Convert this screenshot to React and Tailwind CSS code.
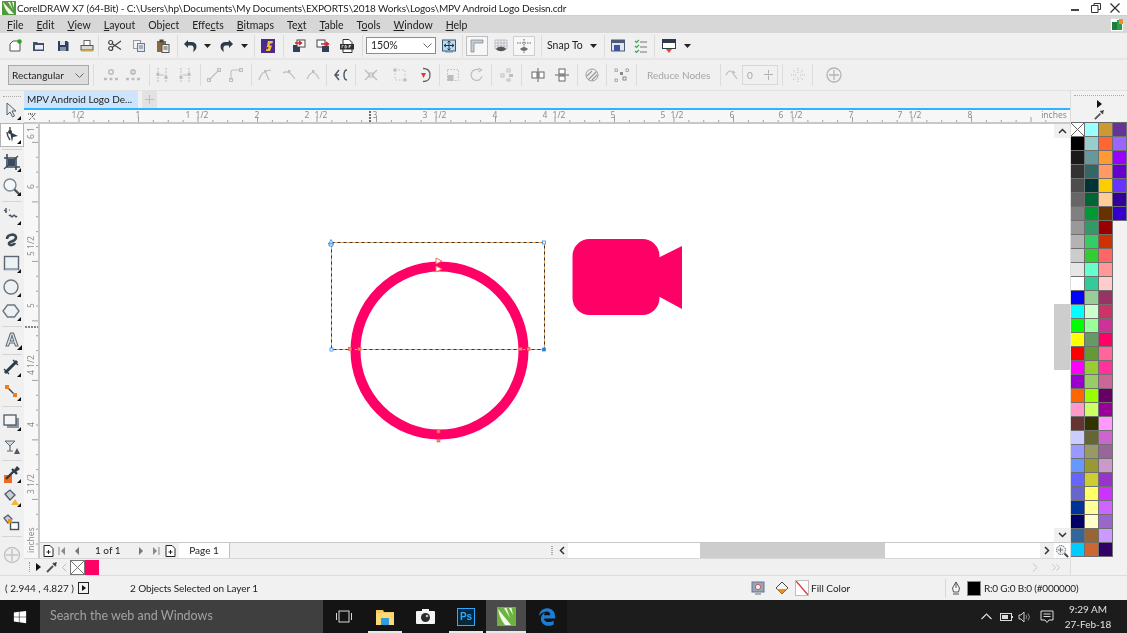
import React from "react";
import { FaWindows } from "react-icons/fa";
import { FaEdgeLegacy } from "react-icons/fa6";

const menu = [
  ["", "F", "ile"], ["", "E", "dit"], ["", "V", "iew"], ["", "L", "ayout"], ["Object", "", ""],
  ["Effe", "c", "ts"], ["", "B", "itmaps"], ["Te", "x", "t"], ["", "T", "able"], ["T", "o", "ols"],
  ["", "W", "indow"], ["", "H", "elp"],
];

const palette = [
  ["#ffffff", "#000000", "#1a1a1a", "#333333", "#4d4d4d", "#666666", "#808080", "#999999", "#b3b3b3", "#cccccc", "#e6e6e6", "#ffffff", "#0000ff", "#00ffff", "#00ff00", "#ffff00", "#ff0000", "#ff00ff", "#9900cc", "#ff6600", "#ff99cc", "#663333", "#ccccff", "#9999ff", "#6699ff", "#6666ff", "#6666cc", "#003399", "#000066", "#336699", "#00ccff"],
  ["#99ffff", "#99cccc", "#669999", "#336666", "#003333", "#006633", "#009933", "#339966", "#33cc66", "#33cc33", "#66ffcc", "#33cc99", "#99cc99", "#ccffcc", "#99ff99", "#669966", "#669933", "#99cc33", "#99cc66", "#99ff00", "#ccff66", "#333300", "#666633", "#999966", "#999933", "#cccc33", "#ffff66", "#ffff99", "#ffffcc", "#996633", "#cc6633"],
  ["#cc9933", "#ff6633", "#ff9933", "#ff9966", "#ffcc00", "#ffcc99", "#663300", "#990000", "#cc3300", "#ff6666", "#ff9999", "#ffcccc", "#993366", "#cc3366", "#cc3399", "#ff0066", "#ff6699", "#ff3399", "#cc6699", "#660066", "#990099", "#ff99ff", "#cc66cc", "#996699", "#cc99cc", "#9933cc", "#cc33ff", "#cc66ff", "#9966cc", "#cc99ff", "#330066"],
  ["#663399", "#9966ff", "#9900ff", "#6600cc", "#6633ff", "#330099", "#3300cc"],
];

// small wrapper so every toolbar glyph shares one viewBox
function G({ children, s = 16, className = "" }) {
  return (
    <svg width={s} height={s} viewBox="0 0 16 16" fill="none" className={"shrink-0 " + className}>
      {children}
    </svg>
  );
}

function Sep({ className = "" }) {
  return <div className={"w-px h-[22px] shrink-0 bg-[#dcdcdc] " + className} />;
}

function Cell({ children, className = "w-6" }) {
  return <div className={"flex items-center justify-center shrink-0 " + className}>{children}</div>;
}

function Caret() {
  return (
    <svg width="7" height="4" viewBox="0 0 7 4"><path d="M0 0h7L3.5 4z" fill="#222" /></svg>
  );
}

const dis = "#bdbdbd";

// disabled node-edit glyph, two nodes and a link
function NodeGlyph({ d = "M3 13 13 3" }) {
  return (
    <G>
      <path d={d} stroke={dis} strokeWidth="1.1" />
      <rect x="1.5" y="11.5" width="3" height="3" stroke={dis} />
      <rect x="11.5" y="1.5" width="3" height="3" stroke={dis} />
    </G>
  );
}

function AddNodes({ minus }) {
  return (
    <G>
      <circle cx="8" cy="5" r="3" fill={dis} />
      <path d={minus ? "M6.5 5h3" : "M6.5 5h3M8 3.5v3"} stroke="#fff" />
      <path d="M1 12h3M6.5 12h3M12 12h3" stroke={dis} strokeWidth="2.4" />
    </G>
  );
}

function SplitNodes({ flip }) {
  return (
    <G>
      <path d="M4 1v14M12 1v14" stroke={dis} strokeDasharray="2 1" />
      <rect x="2.5" y={flip ? 9 : 6} width="3" height="3" fill={dis} />
      <rect x="10.5" y={flip ? 6 : 9} width="3" height="3" fill={dis} />
      <path d="M6 8h4" stroke={dis} />
    </G>
  );
}

function Curve({ d }) {
  return (
    <G>
      <path d={d} stroke={dis} strokeWidth="1.2" />
      <rect x="7" y="3" width="2.4" height="2.4" fill={dis} />
    </G>
  );
}

function TitleBar() {
  return (
    <div className="h-4 bg-white flex items-center shrink-0 text-[#222] border-b border-[#d0d0d0]">
      <svg width="14" height="14" viewBox="0 0 14 14" className="ml-[2px] mt-px">
        <rect width="14" height="14" fill="#4f9a3d" />
        <path d="M1 1 12 13H7C4 10 2 6 1 1zM6 1h2l3 8zM10 1h2v6z" fill="#eef6e6" />
      </svg>
      <span className="ml-[1px] text-[10px] tracking-[-0.13px] leading-4 whitespace-nowrap">
        CorelDRAW X7 (64-Bit) - C:\Users\hp\Documents\My Documents\EXPORTS\2018 Works\Logos\MPV Android Logo Desisn.cdr
      </span>
      <div className="ml-auto flex items-center">
        <svg width="8" height="3" viewBox="0 0 8 3" className="mt-[5px] mr-3"><rect width="8" height="2" fill="#444" /></svg>
        <svg width="10" height="10" viewBox="0 0 10 10" className="mr-[9px]"><path d="M3 2.5V.5h6.5v6H7M.5 2.5h6.5v7H.5z" stroke="#333" fill="none" /></svg>
        <svg width="10" height="10" viewBox="0 0 10 10" className="mr-[7px]"><path d="M.5.5l9 9M9.5.5l-9 9" stroke="#333" strokeWidth="1.3" /></svg>
      </div>
    </div>
  );
}

function MenuBar() {
  return (
    <div className="h-[17px] bg-[#d7d7d7] flex items-center shrink-0 pl-[7px] gap-[13px] text-[10.5px] text-[#222]">
      {menu.map(([a, u, b]) => (
        <span key={a + u + b} className="whitespace-nowrap leading-4">
          {a}
          {u && <span className="underline">{u}</span>}
          {b}
        </span>
      ))}
      <svg width="14" height="14" viewBox="0 0 14 14" className="ml-auto mr-[3px]">
        <rect width="14" height="14" fill="#fff" stroke="#bbb" />
        <rect x="2" y="4" width="5" height="8" fill="#1b7f3a" />
        <rect x="7" y="2" width="5" height="10" fill="#2e9c4a" />
        <rect x="9" y="1" width="4" height="5" fill="#f28c28" />
      </svg>
    </div>
  );
}

function MainToolbar() {
  return (
    <div className="h-[27px] bg-[#f0f0f0] flex items-center shrink-0 pl-[3px] border-b-2 border-[#e6e6e6] text-[10.5px] text-[#222]">
      <Cell>
        <G>
          <path d="M3 6l3-3h7v10H3z" fill="#fff" stroke="#555" />
          <circle cx="12.5" cy="3.5" r="2.3" fill="#2da52d" />
        </G>
      </Cell>
      <Cell>
        <G>
          <path d="M2 4h4l1 1h6v8H2z" fill="#3f4f66" />
          <rect x="4" y="7" width="8" height="4.5" fill="#e9edf2" />
        </G>
      </Cell>
      <Cell>
        <G>
          <path d="M3 3h9l1.5 1.5V13H3z" fill="#2f3f5c" />
          <rect x="5" y="3" width="5" height="4" fill="#dfe4ea" />
          <rect x="5" y="9" width="6" height="4" fill="#8391a6" />
        </G>
      </Cell>
      <Cell>
        <G>
          <rect x="5" y="2.5" width="6" height="5" fill="#fff" stroke="#666" />
          <rect x="2" y="7.5" width="12" height="4.5" fill="#d9d9d9" stroke="#555" />
          <rect x="2" y="12" width="12" height="1.5" fill="#c9a54b" />
        </G>
      </Cell>
      <Sep className="mx-[1px] -ml-px" />
      <Cell className="w-6 ml-[3px]">
        <G>
          <path d="M14 3 5 9.5M14 11.5 5 5.5" stroke="#444" strokeWidth="1.2" />
          <circle cx="3.7" cy="4.5" r="2" stroke="#444" strokeWidth="1.2" />
          <circle cx="3.7" cy="10.5" r="2" stroke="#444" strokeWidth="1.2" />
        </G>
      </Cell>
      <Cell>
        <G>
          <rect x="2.5" y="2.5" width="7" height="8" fill="#f2f2f2" stroke="#9a9a9a" />
          <rect x="6.5" y="5.5" width="7" height="8" fill="#dfe6ec" stroke="#6b7c8c" />
          <path d="M8 8h4M8 10h4" stroke="#6b7c8c" />
        </G>
      </Cell>
      <Cell>
        <G>
          <rect x="2" y="3" width="9" height="11" fill="#8a6a3f" />
          <rect x="4.5" y="1.5" width="4" height="3" fill="#444" />
          <rect x="7" y="6.5" width="7" height="8" fill="#eee" stroke="#555" />
          <path d="M8.5 9h4M8.5 11h4" stroke="#555" />
        </G>
      </Cell>
      <Sep className="ml-[2px] mr-[1px]" />
      <Cell className="w-[22px]">
        <G>
          <path d="M6 2 2 6l4 4V7.5h3c2.5 0 3 2 2.5 4.5-.2 1-.5 2-.5 2 2-1 3.5-3 3.5-5.5 0-3-2-4.5-5-4.5H6z" fill="#2f3b4d" />
        </G>
      </Cell>
      <Cell className="w-3"><Caret /></Cell>
      <Cell className="w-6 ml-[2px]">
        <G>
          <path d="M10 2l4 4-4 4V7.5H7c-2.5 0-3 2-2.5 4.5.2 1 .5 2 .5 2-2-1-3.5-3-3.5-5.5 0-3 2-4.5 5-4.5h3z" fill="#2f3b4d" />
        </G>
      </Cell>
      <Cell className="w-[10px]"><Caret /></Cell>
      <Sep className="ml-[5px] mr-[1px]" />
      <Cell>
        <G>
          <rect x="1" y="1" width="14" height="14" fill="#4b2a8c" />
          <path d="M6 13 8 3h5l-.6 2.5H10l-.4 2h2.4L10 13H6l.6-2H8l.5-2H6.5z" fill="#f2c230" />
        </G>
      </Cell>
      <Sep className="mx-[3px]" />
      <Cell>
        <G>
          <rect x="2" y="7" width="7" height="7" fill="#2f3f5c" />
          <rect x="6" y="2" width="8" height="7" fill="#fff" stroke="#444" />
          <path d="M4 5h6M8 3l2.5 2L8 7" stroke="#d82020" strokeWidth="1.4" />
        </G>
      </Cell>
      <Cell>
        <G>
          <rect x="2" y="2" width="8" height="7" fill="#fff" stroke="#444" />
          <rect x="7" y="8" width="7" height="6" fill="#2f3f5c" />
          <path d="M6 6h7M11 4l2.5 2L11 8" stroke="#d82020" strokeWidth="1.4" />
        </G>
      </Cell>
      <Cell>
        <G>
          <path d="M4 1.5h6l3 3v10H4z" fill="#fff" stroke="#333" />
          <rect x="1" y="6" width="14" height="5.5" fill="#2f2f2f" />
          <path d="M3 10V7.5h1.5M6 10V7.5h1c1 0 1 2.5 0 2.5zM10 10V7.5h2M10 8.7h1.5" stroke="#fff" strokeWidth=".7" />
        </G>
      </Cell>
      <Sep className="mx-[3px]" />
      <div className="w-[70px] h-[17px] bg-white border border-[#8c8c8c] flex items-center justify-between pl-[4px] pr-[3px] shrink-0">
        <span>150%</span>
        <svg width="9" height="5" viewBox="0 0 9 5"><path d="M.5.5l4 4 4-4" stroke="#666" fill="none" /></svg>
      </div>
      <Cell className="w-[26px]">
        <G>
          <rect x="1.5" y="2" width="13" height="11" fill="#bcd9ec" stroke="#3a5a78" />
          <path d="M8 3v9M3 7.5h10M5 6 3 7.5 5 9M11 6l2 1.5L11 9M6.5 4.5 8 3l1.5 1.5M6.5 10.5 8 12l1.5-1.5" stroke="#1a3a5a" />
          <rect x="4" y="13" width="8" height="1.5" fill="#7c8ea0" />
        </G>
      </Cell>
      <Sep />
      <Cell className="w-[22px] h-[20px] ml-[3px] border border-[#bdbdbd] bg-[#f7f7f7]">
        <G>
          <path d="M2 2h12v3H5v9H2z" fill="#c5cdd6" stroke="#76838f" strokeWidth=".7" />
        </G>
      </Cell>
      <Cell className="w-[25px]">
        <G>
          <path d="M2 2h12v9H2zM2 5h12M2 8h12M5 2v9M8 2v9M11 2v9" stroke="#aab" strokeWidth=".7" />
          <path d="M3 11c2-3 8-3 10 0-2 3-8 3-10 0z" fill="#555" />
        </G>
      </Cell>
      <Cell className="w-[22px] h-[20px] border border-[#cfcfcf] bg-[#f7f7f7]">
        <G>
          <path d="M8 1v14M1 5h14" stroke="#666" strokeDasharray="1.5 1" />
          <path d="M4 11c2-2.5 6-2.5 8 0-2 2.5-6 2.5-8 0z" fill="#707070" />
        </G>
      </Cell>
      <Sep className="ml-[6px]" />
      <span className="ml-[5px] whitespace-nowrap w-[40px]">Snap To</span>
      <Cell className="w-3"><Caret /></Cell>
      <Sep className="ml-[5px]" />
      <Cell className="w-[26px]">
        <G>
          <rect x="1.5" y="2" width="13" height="11" fill="#dfe6f2" stroke="#4d5a78" />
          <rect x="1.5" y="2" width="13" height="3" fill="#4d5a78" />
          <rect x="4" y="7" width="6" height="6" fill="#3f53a0" />
        </G>
      </Cell>
      <Cell className="w-[20px]">
        <G>
          <path d="M2 3l1.5 1.5L6 2M2 8l1.5 1.5L6 7M2 13l1.5 1.5L6 12" stroke="#3aa655" strokeWidth="1.2" />
          <path d="M7 4h7M7 9h7M7 14h7" stroke="#777" strokeWidth="1.2" />
        </G>
      </Cell>
      <Sep className="ml-[3px]" />
      <Cell className="w-[28px]">
        <G>
          <rect x="1.5" y="1.5" width="13" height="9" fill="#fff" stroke="#2f3a4d" />
          <rect x="1.5" y="1.5" width="13" height="3.5" fill="#2f3a4d" />
          <path d="M5 11h6l-3 4z" fill="#ef4423" />
        </G>
      </Cell>
      <Cell className="w-[8px]"><Caret /></Cell>
    </div>
  );
}

function PropertyBar() {
  return (
    <div className="h-[31px] bg-[#f0f0f0] flex items-center shrink-0 pl-[8px] border-b border-[#e2e2e2] text-[10px]">
      <div className="w-[81px] h-[20px] bg-[#dedede] border border-[#a8a8a8] flex items-center justify-between pl-[3px] pr-[4px] shrink-0 text-[#222]">
        <span>Rectangular</span>
        <svg width="9" height="5" viewBox="0 0 9 5"><path d="M.5.5l4 4 4-4" stroke="#666" fill="none" /></svg>
      </div>
      <Sep className="ml-[4px]" />
      <Cell className="w-[23px] ml-[5px]"><AddNodes /></Cell>
      <Cell className="w-[22px]"><AddNodes minus /></Cell>
      <Sep className="ml-[5px]" />
      <Cell className="w-[23px]"><SplitNodes /></Cell>
      <Cell className="w-[23px]"><SplitNodes flip /></Cell>
      <Sep className="ml-[4px]" />
      <Cell className="w-[22px] ml-[2px]"><NodeGlyph /></Cell>
      <Cell className="w-[22px]"><NodeGlyph d="M3 13V5Q3 3 5 3H13" /></Cell>
      <Sep className="ml-[4px]" />
      <Cell className="w-[25px]"><Curve d="M2 13Q4 4 14 3M8 4 12 13" /></Cell>
      <Cell className="w-[24px]"><Curve d="M2 6Q8 2 14 12" /></Cell>
      <Cell className="w-[23px]"><Curve d="M2 12Q8 -1 14 12" /></Cell>
      <Sep className="ml-[2px]" />
      <Cell className="w-[28px]">
        <G>
          <path d="M6 3 2 8l4 5M6 8H2" stroke="#4b5563" strokeWidth="1.4" />
          <path d="M14 3c-4 0-4 10 0 10" stroke="#4b5563" strokeWidth="1.4" />
        </G>
      </Cell>
      <Sep />
      <Cell className="w-[30px]">
        <G>
          <path d="M2 3l5 5-5 5M14 3 9 8l5 5" stroke={dis} strokeWidth="1.3" />
          <rect x="6" y="6" width="4" height="4" stroke={dis} />
        </G>
      </Cell>
      <Cell className="w-[28px]">
        <G>
          <path d="M3 3h10v10H3z" stroke={dis} strokeDasharray="1.5 2" />
          <rect x="1.5" y="1.5" width="3" height="3" fill={dis} />
          <rect x="11.5" y="11.5" width="3" height="3" fill={dis} />
        </G>
      </Cell>
      <Cell className="w-[21px]">
        <G>
          <path d="M6 1.5c5 0 7 3 7 6.5s-2 6.5-7 6.5" stroke="#666" strokeWidth="1.3" />
          <path d="M4 6h5l-2.5 5z" fill="#e03a3a" />
        </G>
      </Cell>
      <Sep className="ml-[4px]" />
      <Cell className="w-[26px]">
        <G>
          <rect x="2.5" y="2.5" width="11" height="11" stroke={dis} strokeDasharray="1.5 1.5" />
          <rect x="2.5" y="8" width="6" height="6" fill={dis} />
        </G>
      </Cell>
      <Cell className="w-[22px]">
        <G>
          <path d="M13 9a5.5 5.5 0 1 1-3-6M9.5 1l3 2-3 2" stroke={dis} strokeWidth="1.2" />
        </G>
      </Cell>
      <Sep className="ml-[3px]" />
      <Cell className="w-[29px]">
        <G>
          <rect x="8" y="2" width="3" height="3" stroke={dis} />
          <rect x="2" y="7" width="3" height="3" stroke={dis} />
          <rect x="10" y="7" width="4" height="3" fill={dis} />
          <rect x="8" y="12" width="3" height="2" stroke={dis} />
        </G>
      </Cell>
      <Sep />
      <Cell className="w-[26px] ml-[3px]">
        <G>
          <path d="M8 1v14" stroke="#666" />
          <rect x="2" y="5" width="5" height="6" stroke="#666" fill="#fff" />
          <rect x="9" y="5" width="5" height="6" stroke="#666" fill="#fff" />
        </G>
      </Cell>
      <Cell className="w-[21px]">
        <G>
          <path d="M1 8h14" stroke="#666" />
          <rect x="5" y="2" width="6" height="5" stroke="#666" fill="#fff" />
          <rect x="5" y="9" width="6" height="5" stroke="#666" fill="#fff" />
        </G>
      </Cell>
      <Sep className="ml-[5px]" />
      <Cell className="w-[28px]">
        <G>
          <circle cx="8" cy="8" r="6" stroke="#9a9a9a" />
          <path d="M4.5 12.5l8-8M3 9l5-5M8 13l5-5" stroke="#9a9a9a" strokeWidth="1.3" />
        </G>
      </Cell>
      <Sep />
      <Cell className="w-[29px]">
        <G>
          <rect x="1" y="2" width="2.5" height="2.5" stroke="#8a8a8a" strokeWidth=".7" />
          <rect x="12" y="2" width="2.5" height="2.5" stroke="#8a8a8a" strokeWidth=".7" />
          <rect x="1" y="12" width="2.5" height="2.5" stroke="#8a8a8a" strokeWidth=".7" />
          <rect x="6" y="5" width="3" height="3" fill="#8a8a8a" />
          <rect x="9" y="10" width="3" height="3" stroke="#8a8a8a" />
        </G>
      </Cell>
      <Sep />
      <span className="ml-[10px] w-[73px] text-[#a5a5a5] whitespace-nowrap">Reduce Nodes</span>
      <Sep />
      <Cell className="w-[21px]">
        <G>
          <path d="M2 8q3-6 6-3l5 7M9 4l2 2" stroke={dis} strokeWidth="1.2" />
        </G>
      </Cell>
      <div className="w-[36px] h-[20px] border border-[#d8d8d8] flex items-center justify-between px-[4px] text-[#a8a8a8] shrink-0">
        <span>0</span>
        <svg width="9" height="10" viewBox="0 0 9 10"><path d="M0 4.5h9M4.5 0v3.5M4.5 5.5V10" stroke="#b0b0b0" /></svg>
      </div>
      <Sep className="ml-[4px]" />
      <Cell className="w-[29px]">
        <G>
          <path d="M8 1v5M8 10v5M1 8h5M10 8h5M3 3l3 3M13 3l-3 3M3 13l3-3M13 13l-3-3" stroke={dis} strokeDasharray="1 1" />
        </G>
      </Cell>
      <Sep />
      <Cell className="w-[41px]">
        <svg width="16" height="16" viewBox="0 0 16 16" fill="none">
          <circle cx="8" cy="8" r="7" stroke="#b5b5b5" strokeWidth="1.3" />
          <path d="M8 3v10M3 8h10" stroke="#b5b5b5" strokeWidth="1.3" />
        </svg>
      </Cell>
    </div>
  );
}

// toolbox glyph: 22px box with the flyout corner triangle built in
function Tool({ children, corner = true, className = "" }) {
  return (
    <div className={"h-6 w-6 flex items-center justify-center shrink-0 " + className}>
      <svg width="20" height="20" viewBox="0 0 20 20" fill="none">
        {children}
        {corner && <path d="M19 15v4h-4z" fill="#111" />}
      </svg>
    </div>
  );
}

function ToolSep({ className = "" }) {
  return (
    <div className={"h-1 flex items-center justify-center shrink-0 " + className}>
      <div className="w-5 h-px bg-[#d4d4d4]" />
    </div>
  );
}

function Toolbox() {
  return (
    <div className="w-6 bg-[#f0f0f0] flex flex-col shrink-0 overflow-hidden">
      <div className="h-[7px] shrink-0 mt-px mx-[3px] border-t border-dotted border-[#aaa] translate-y-[4px]" />
      <Tool>
        <path d="M5 2v12l3-3 2.5 5 2-1-2.5-5h4z" fill="#e6ebf0" stroke="#55606e" />
      </Tool>
      <div className="h-6 w-6 flex items-center justify-center shrink-0 bg-white border border-[#b4b4b4]">
        <svg width="20" height="20" viewBox="0 0 20 20" fill="none">
          <path d="M8 2v6M5 7c0 3 1 5 3 8" stroke="#444" strokeWidth="1.4" />
          <path d="M8 7l8 4-5 1-1 5z" fill="#2f3b4d" />
          <circle cx="8" cy="7" r="2" fill="#2f3b4d" />
          <path d="M19 15v4h-4z" fill="#111" />
        </svg>
      </div>
      <ToolSep />
      <Tool>
        <path d="M5 1v13h13" stroke="#3a4a5c" strokeWidth="1.6" />
        <path d="M2 5h12v12" stroke="#3a4a5c" strokeWidth="1.6" />
        <path d="M2 16 16 3" stroke="#3a4a5c" strokeWidth="1.2" />
        <rect x="6" y="6" width="7" height="7" fill="#3a4a5c" />
      </Tool>
      <Tool>
        <circle cx="8" cy="8" r="6" fill="#f4f6f8" stroke="#7a8794" strokeWidth="1.4" />
        <path d="M12.5 12.5 18 18" stroke="#44525f" strokeWidth="2.4" />
      </Tool>
      <ToolSep className="mb-px" />
      <Tool>
        <path d="M2 4l3 2M4 2v5M7 10c2-3 2 3 4 0s2 3 4 0" stroke="#465463" strokeWidth="1.4" />
        <path d="M7 4h1" stroke="#465463" />
      </Tool>
      <Tool corner={false}>
        <path d="M5 9c0-5 9-6 9-1.5S6 11 7 14c.6 2 5 1 6-1" stroke="#3b4653" strokeWidth="2.6" />
      </Tool>
      <Tool>
        <rect x="2.5" y="2.5" width="14" height="13" fill="#eef1f4" stroke="#5a6672" strokeWidth="1.4" />
        <path d="M3 14h13v2H3z" fill="#9aa6b1" />
      </Tool>
      <Tool>
        <circle cx="9" cy="9" r="7" fill="#eef1f4" stroke="#6a7681" strokeWidth="1.4" />
      </Tool>
      <Tool>
        <path d="M5.5 3h7L17 9l-4.5 6h-7L1 9z" fill="#eef1f4" stroke="#6a7681" strokeWidth="1.4" />
      </Tool>
      <ToolSep />
      <div className="h-6 w-6 flex items-center justify-center shrink-0 relative">
        <span className="font-['Liberation_Sans',sans-serif] font-bold text-[18px] leading-5 text-[#dfe4ea] [-webkit-text-stroke:1px_#5e6b78]">A</span>
        <svg width="5" height="5" viewBox="0 0 5 5" className="absolute right-[2px] bottom-[2px]"><path d="M5 0v5H0z" fill="#111" /></svg>
      </div>
      <ToolSep />
      <Tool>
        <path d="M3 15 15 3" stroke="#2f3b4d" strokeWidth="3" />
        <path d="M2 11l5 5M11 2l5 5" stroke="#2f3b4d" strokeWidth="1.4" />
      </Tool>
      <Tool>
        <path d="M5 5l9 9" stroke="#3a4653" strokeWidth="1.4" />
        <rect x="3" y="3" width="4" height="4" fill="#ef7d1a" />
        <rect x="11" y="11" width="4" height="4" fill="#ef7d1a" />
      </Tool>
      <ToolSep className="mb-[2px]" />
      <Tool>
        <rect x="5" y="6" width="12" height="10" fill="#8b95a0" />
        <rect x="2" y="3" width="12" height="10" fill="#f2f4f6" stroke="#4d5965" strokeWidth="1.3" />
      </Tool>
      <Tool corner={false}>
        <path d="M3 5h10l-5 5z" fill="#cdd5dc" stroke="#5f6b77" />
        <path d="M8 10v5M5 15h6" stroke="#5f6b77" strokeWidth="1.2" />
        <path d="M12 18l3-6 3 6z" fill="#4d5965" />
      </Tool>
      <ToolSep />
      <Tool>
        <rect x="2" y="11" width="8" height="8" fill="#ee6a1f" />
        <path d="M4 15 12 7M10 5l5 5" stroke="#303a46" strokeWidth="2.4" />
        <path d="M12 6l3-4 3 3-4 3z" fill="#303a46" />
      </Tool>
      <Tool>
        <path d="M3 6l5-4 5 5-5 5z" fill="#c9d1d8" stroke="#4d5965" strokeWidth="1.3" />
        <path d="M9 17l4-6 4 6z" fill="#f2b632" />
      </Tool>
      <Tool corner={false}>
        <path d="M2 6l4-3 4 4-4 4z" fill="#c9d1d8" stroke="#4d5965" strokeWidth="1.2" />
        <rect x="8.5" y="10.5" width="8" height="7" fill="#fff" stroke="#44525f" strokeWidth="1.4" />
        <rect x="6" y="7" width="4" height="4" fill="#ef8f2a" />
      </Tool>
      <ToolSep />
      <div className="h-6 w-6 mt-[5px] flex items-center justify-center shrink-0">
        <svg width="18" height="18" viewBox="0 0 18 18" fill="none">
          <circle cx="9" cy="9" r="7.5" stroke="#c4c4c4" strokeWidth="1.5" />
          <path d="M9 3v12M3 9h12" stroke="#c4c4c4" strokeWidth="1.5" />
        </svg>
      </div>
    </div>
  );
}

const hLabels = [
  ["1/2", 78], ["1", 138], ["1", 188], ["1/2", 202], ["2", 257], ["2", 307], ["1/2", 321], ["3", 375],
  ["3", 425], ["1/2", 440], ["4", 495], ["4", 545], ["1/2", 559], ["5", 613], ["5", 663], ["1/2", 677],
  ["6", 732], ["6", 781], ["1/2", 796], ["7", 851], ["7", 900], ["1/2", 915], ["8", 970],
];

const vLabels = [
  ["6 1", 139], ["6", 189], ["5 1/2", 256], ["5", 308], ["4 1/2", 375], ["4", 427], ["3 1/2", 494],
];

function HRuler() {
  const ticks = [];
  for (let i = 0; i < 70; i++) ticks.push(19 + i * 14.875);
  return (
    <div className="h-[14px] bg-[#f7f7f7] shrink-0 border-b-2 border-[#c8c8c8]">
      <svg width="1046" height="12" viewBox="24 110 1046 12" className="block font-['Noto_Sans',sans-serif]">
        <path d="M28 114l8 0M29 120l7-7M30 113l5 7" stroke="#333" strokeDasharray="1 1" />
        {ticks.map((x, i) => x > 41 && (
          <rect key={i} x={x} y={i % 4 === 0 ? 117 : 120} width="1" height={i % 4 === 0 ? 5 : 2} fill="#a0a0a0" />
        ))}
        {hLabels.map(([t, x], i) => (
          <text key={i} x={x} y="118" fontSize="8.5" textAnchor="middle" fill="#8c8c8c">{t}</text>
        ))}
        <text x="1054" y="118" fontSize="8.5" textAnchor="middle" fill="#8c8c8c">inches</text>
        <path d="M370 111v11" stroke="#111" strokeDasharray="2 1" strokeWidth="1.2" />
      </svg>
    </div>
  );
}

function VRuler() {
  const ticks = [];
  for (let i = 0; i < 32; i++) ticks.push(127 + i * 14.875);
  return (
    <div className="w-4 bg-[#f7f7f7] shrink-0 border-r-2 border-[#c8c8c8]">
      <svg width="14" height="434" viewBox="24 124 14 434" className="block font-['Noto_Sans',sans-serif]">
        {ticks.map((y, i) => (
          <rect key={i} x={(i + 3) % 4 === 0 ? 32 : 36} y={y} width={(i + 3) % 4 === 0 ? 6 : 2} height="1" fill="#a0a0a0" />
        ))}
        {vLabels.map(([t, y], i) => (
          <text key={i} transform={`translate(34 ${y}) rotate(-90)`} fontSize="8.5" fill="#8c8c8c" xmlSpace="preserve">{t}</text>
        ))}
        <text transform="translate(34 553) rotate(-90)" fontSize="8.5" fill="#8c8c8c">inches</text>
        <path d="M25 327h13" stroke="#111" strokeDasharray="2 1" strokeWidth="1.2" />
      </svg>
    </div>
  );
}

function Handle({ x, y, dark }) {
  return <rect x={x - 1.5} y={y - 1.5} width="3" height="3" fill={dark ? "#1f7fe0" : "#fff"} stroke="#2f8fe8" strokeWidth=".8" />;
}

function Canvas() {
  // coordinates below are page coordinates, the svg is shifted by the viewBox
  return (
    <div className="flex-1 bg-white relative overflow-hidden">
      <svg width="1014" height="418" viewBox="40 124 1014 418" className="absolute inset-0">
        <circle cx="439.5" cy="350.5" r="84" stroke="#ff0066" strokeWidth="10" fill="none" />
        <path d="M331.5 242.5h213v107h-213z" fill="none" stroke="#f0a860" />
        <path d="M331.5 242.5h213v107h-213z" fill="none" stroke="#333" strokeDasharray="3 3" />
        <Handle x={331.5} y={349.5} />
        <Handle x={544} y={349.5} dark />
        <Handle x={544} y={242.5} />
        <path d="M331 239.5l2.5 4.5h-5z M329 243h4v3h-4z" fill="#fff" stroke="#3b8fe0" strokeWidth=".9" />
        <path d="M436 258l6 3-6 3zM436 266l6 3-6 3z" fill="#fff" stroke="#f0685a" />
        <g fill="#ff8a70" stroke="#e0503c" strokeWidth=".6">
          <rect x="348.5" y="347.5" width="3" height="3" />
          <rect x="358" y="347.5" width="3" height="3" />
          <rect x="519" y="347.5" width="3" height="3" />
          <rect x="527" y="347.5" width="3" height="3" />
          <rect x="437" y="430" width="3" height="3" />
          <rect x="437" y="439" width="3" height="3" />
        </g>
        <rect x="572.5" y="239" width="87" height="76" rx="17" fill="#ff0066" />
        <path d="M658 258 682 246V309L658 296z" fill="#ff0066" />
      </svg>
    </div>
  );
}

function VScroll() {
  return (
    <div className="w-4 bg-white flex flex-col shrink-0">
      <div className="h-[14px] bg-[#f0f0f0] flex items-center justify-center shrink-0">
        <svg width="9" height="6" viewBox="0 0 9 6"><path d="M1 5l3.5-3.5L8 5" stroke="#333" strokeWidth="1.5" fill="none" /></svg>
      </div>
      <div className="h-[166px] shrink-0" />
      <div className="h-[66px] bg-[#cdcdcd] shrink-0" />
      <div className="flex-1" />
      <div className="h-[14px] bg-[#f0f0f0] flex items-center justify-center shrink-0">
        <svg width="9" height="6" viewBox="0 0 9 6"><path d="M1 1l3.5 3.5L8 1" stroke="#333" strokeWidth="1.5" fill="none" /></svg>
      </div>
    </div>
  );
}

function PageIcon() {
  return (
    <svg width="11" height="12" viewBox="0 0 11 12" fill="none" className="shrink-0">
      <path d="M1 .5h6l3 3v8H1z" fill="#fff" stroke="#222" />
      <path d="M3.5 7h4M5.5 5v4" stroke="#222" />
    </svg>
  );
}

function PageNav() {
  return (
    <div className="h-4 flex shrink-0 border-t border-[#c8c8c8] text-[10px] text-[#222]">
      <div className="w-[515px] bg-[#f0f0f0] flex items-center pl-[1px] shrink-0 relative">
        <Cell className="w-[12px] ml-px"><PageIcon /></Cell>
        <svg width="8" height="8" viewBox="0 0 8 8" className="ml-[4px]"><path d="M1 0v8" stroke="#888" /><path d="M7 0v8L3 4z" fill="#888" /></svg>
        <svg width="6" height="8" viewBox="0 0 6 8" className="ml-[8px]"><path d="M5 0v8L1 4z" fill="#777" /></svg>
        <span className="ml-[15px] w-[36px] whitespace-nowrap">1 of 1</span>
        <svg width="6" height="8" viewBox="0 0 6 8" className="ml-[7px]"><path d="M1 0v8l4-4z" fill="#777" /></svg>
        <svg width="8" height="8" viewBox="0 0 8 8" className="ml-[8px]"><path d="M7 0v8" stroke="#888" /><path d="M1 0v8l4-4z" fill="#888" /></svg>
        <Cell className="w-[12px] ml-[4px]"><PageIcon /></Cell>
        <div className="ml-[3px] w-[51px] h-[15px] bg-white border-r border-[#c0c0c0] flex items-center justify-center">Page 1</div>
        <div className="absolute right-[2px] top-[3px] h-[9px] w-[2px] border-x border-dotted border-[#aaa]" />
      </div>
      <div className="flex-1 bg-white flex items-stretch">
        <div className="w-[13px] bg-[#f0f0f0] flex items-center justify-center shrink-0">
          <svg width="6" height="9" viewBox="0 0 6 9"><path d="M5 1 1.5 4.5 5 8" stroke="#333" strokeWidth="1.5" fill="none" /></svg>
        </div>
        <div className="ml-[132px] w-[185px] bg-[#cdcdcd] shrink-0" />
        <div className="ml-auto w-[14px] bg-[#f0f0f0] flex items-center justify-center shrink-0">
          <svg width="6" height="9" viewBox="0 0 6 9"><path d="M1 1l3.5 3.5L1 8" stroke="#333" strokeWidth="1.5" fill="none" /></svg>
        </div>
        <div className="w-4 flex items-center justify-center shrink-0">
          <svg width="14" height="14" viewBox="0 0 14 14" fill="none">
            <circle cx="6" cy="6" r="4.5" fill="#eee" stroke="#5a6672" strokeDasharray="1.5 .8" />
            <path d="M5.5 3.5v5M3 6h5" stroke="#777" />
            <path d="M9.5 9.5 13 13" stroke="#3a4653" strokeWidth="2" />
          </svg>
        </div>
      </div>
    </div>
  );
}

function ColorStrip() {
  return (
    <div className="h-[17px] bg-[#f0f0f0] flex items-center shrink-0 border-t border-[#d8d8d8] pl-[5px]">
      <div className="h-[10px] w-[3px] border-l border-dotted border-[#999]" />
      <svg width="5" height="8" viewBox="0 0 5 8" className="ml-[4px]"><path d="M0 0v8l5-4z" fill="#111" /></svg>
      <svg width="12" height="12" viewBox="0 0 12 12" className="ml-[5px]">
        <path d="M1 11 7 5M7 2l3 3" stroke="#555" strokeWidth="2" />
        <path d="M8 3l2-2 1 1-2 2z" fill="#222" />
      </svg>
      <svg width="5" height="9" viewBox="0 0 5 9" className="ml-[4px]"><path d="M4.5 .5 .5 4.5l4 4" stroke="#c0c0c0" fill="none" /></svg>
      <svg width="15" height="15" viewBox="0 0 15 15" className="ml-[3px] shrink-0">
        <rect x=".5" y=".5" width="14" height="14" fill="#fff" stroke="#777" />
        <path d="M1 1l13 13M14 1 1 14" stroke="#777" />
      </svg>
      <div className="w-[14px] h-[15px] bg-[#ff0066] shrink-0" />
      <svg width="6" height="9" viewBox="0 0 6 9" className="ml-auto mr-[14px]"><path d="M1 .5l4 4-4 4" stroke="#c4c4c4" fill="none" /></svg>
      <svg width="8" height="7" viewBox="0 0 8 7" className="mr-[10px]"><path d="M.5.5l3 3-3 3M4.5.5l3 3-3 3" stroke="#c4c4c4" fill="none" /></svg>
    </div>
  );
}

function Palette() {
  return (
    <div className="w-[57px] bg-[#f2f2f2] flex flex-col shrink-0 border-l border-[#dcdcdc]">
      <div className="h-[32px] shrink-0 flex flex-col items-center relative">
        <div className="w-[50px] mt-[4px] border-t border-dotted border-[#aaa]" />
        <svg width="5" height="8" viewBox="0 0 5 8" className="mt-[4px]"><path d="M0 0v8l5-4z" fill="#111" /></svg>
        <svg width="11" height="11" viewBox="0 0 12 12" className="mt-[1px]">
          <path d="M1 11 7 5M7 2l3 3" stroke="#555" strokeWidth="2" />
          <path d="M8 3l2-2 1 1-2 2z" fill="#222" />
        </svg>
      </div>
      <div className="flex items-start border-t border-[#6b6b6b] -mt-px">
        {palette.map((col, c) => (
          <div key={c} className="flex flex-col">
            {col.map((hex, r) => (
              <div
                key={r}
                style={{ backgroundColor: hex }}
                className="w-[14px] h-[14px] border-r border-b border-[#6f6f6f] relative"
              >
                {c === 0 && r === 0 && (
                  <svg width="13" height="13" viewBox="0 0 13 13" className="absolute inset-0">
                    <path d="M0 0l13 13M13 0 0 13" stroke="#666" />
                  </svg>
                )}
              </div>
            ))}
          </div>
        ))}
      </div>
    </div>
  );
}

function StatusBar() {
  return (
    <div className="h-[25px] bg-[#f1f1f1] flex items-center shrink-0 border-t border-[#dcdcdc] text-[10px] text-[#222] pl-[5px]">
      <div className="w-[746px] flex items-center shrink-0">
        <span className="w-[73px] whitespace-nowrap">( 2.944 , 4.827 )</span>
        <div className="w-[11px] h-[12px] border border-[#222] flex items-center justify-center shrink-0">
          <svg width="4" height="6" viewBox="0 0 4 6"><path d="M0 0v6l4-3z" fill="#111" /></svg>
        </div>
        <span className="ml-[41px] whitespace-nowrap tracking-[-0.1px]">2 Objects Selected on Layer 1</span>
      </div>
      <svg width="14" height="14" viewBox="0 0 14 14" className="shrink-0">
        <rect x="1" y="1" width="12" height="10" fill="#9aa4b8" stroke="#6b7590" />
        <circle cx="7" cy="6" r="2.6" fill="#f2f2f2" stroke="#c85a5a" />
        <path d="M4 13h6" stroke="#8a93a6" strokeWidth="1.4" />
      </svg>
      <svg width="14" height="15" viewBox="0 0 14 15" fill="none" className="ml-[10px] shrink-0">
        <path d="M7 1 13 7 7 13 1 7z" fill="#f4f4f4" stroke="#444" />
        <path d="M2 8h10L7 13z" fill="#ef8f1c" />
      </svg>
      <div className="ml-[6px] w-[14px] h-[16px] bg-white border border-[#bdbdbd] shrink-0 relative">
        <svg width="12" height="14" viewBox="0 0 12 14" className="absolute inset-0"><path d="M0 0l12 14" stroke="#d8342c" strokeWidth="1.3" /></svg>
      </div>
      <span className="ml-[2px] w-[134px] whitespace-nowrap">Fill Color</span>
      <div className="w-px h-[19px] bg-[#d8d8d8] shrink-0" />
      <svg width="10" height="14" viewBox="0 0 10 14" fill="none" className="ml-[5px] shrink-0">
        <path d="M5 1 8.5 7 7.5 11h-5L1.500 7z" fill="#f6f6f6" stroke="#555" />
        <path d="M5 1v6M2 13h6" stroke="#555" />
      </svg>
      <div className="ml-[6px] w-[14px] h-[15px] bg-black shrink-0 border border-[#888]" />
      <span className="ml-[3px] whitespace-nowrap tracking-[-0.2px]">R:0 G:0 B:0 (#000000)</span>
    </div>
  );
}

function Taskbar() {
  return (
    <div className="h-[33px] bg-[#1c1c1c] flex items-stretch shrink-0 text-white">
      <div className="w-10 flex items-center justify-center shrink-0 bg-[#141414]">
        <FaWindows className="w-[14px] h-[14px] text-white" />
      </div>
      <div className="w-[283px] bg-[#3f3f3f] flex items-center pl-[10px] text-[12.5px] text-[#a2a2a2] shrink-0 whitespace-nowrap">
        Search the web and Windows
      </div>
      <div className="w-[42px] flex items-center justify-center shrink-0 bg-[#141414]">
        <svg width="16" height="13" viewBox="0 0 16 13" fill="none">
          <rect x="3" y="1" width="10" height="11" stroke="#d8d8d8" />
          <path d="M.5 3v7M15.500 3v7" stroke="#d8d8d8" />
        </svg>
      </div>
      <div className="w-[40px] flex items-center justify-center shrink-0 relative bg-[#141414]">
        <svg width="18" height="17" viewBox="0 0 18 17">
          <path d="M0 2h7l1 2h10v13H0z" fill="#f4c95d" />
          <rect x="0" y="5" width="18" height="12" fill="#fbd976" />
          <rect x="5" y="10" width="8" height="7" fill="#2f9be0" />
        </svg>
        <div className="absolute bottom-0 left-[3px] right-[3px] h-[2px] bg-[#e8e8e8]" />
      </div>
      <div className="w-[41px] flex items-center justify-center shrink-0 bg-[#141414]">
        <svg width="19" height="15" viewBox="0 0 19 15">
          <rect y="2" width="19" height="13" rx="1" fill="#f4f4f4" />
          <rect x="6" y="0" width="7" height="3" fill="#f4f4f4" />
          <circle cx="9.500" cy="8.500" r="4.500" fill="#2a2a2a" />
          <circle cx="11" cy="7" r="1.300" fill="#bbb" />
        </svg>
      </div>
      <div className="w-[40px] flex items-center justify-center shrink-0 relative bg-[#141414]">
        <div className="w-[18px] h-[18px] bg-[#06283d] border border-[#31a8ff] flex items-center justify-center font-['Liberation_Sans',sans-serif] font-bold text-[10px] text-[#31a8ff]">
          Ps
        </div>
        <div className="absolute bottom-0 left-[3px] right-[3px] h-[2px] bg-[#e8e8e8]" />
      </div>
      <div className="w-[40px] flex items-center justify-center shrink-0 relative bg-[#4a4a4a]">
        <svg width="19" height="19" viewBox="0 0 19 19">
          <rect width="19" height="19" fill="#6db33f" />
          <path d="M1 2 14 18H8C4 13 2 8 1 2zM7 1h2.500L13 11zM12 1h2.500L16 8z" fill="#f2f8ea" />
        </svg>
        <div className="absolute bottom-0 inset-x-0 h-[2px] bg-[#e8e8e8]" />
      </div>
      <div className="w-[41px] flex items-center justify-center shrink-0 bg-[#141414]">
        <FaEdgeLegacy className="w-[18px] h-[18px] text-[#1a7fd4]" />
      </div>
      <div className="flex-1 flex items-center justify-end pr-[17px] text-[#e0e0e0]">
        <svg width="11" height="7" viewBox="0 0 11 7" fill="none" className="mr-[8px]"><path d="M.5 6l5-5 5 5" stroke="#ddd" strokeWidth="1.2" /></svg>
        <svg width="13" height="8" viewBox="0 0 13 8" fill="none" className="mr-[5px]">
          <rect x=".5" y=".5" width="11" height="7" stroke="#ddd" />
          <rect x="2" y="2" width="6" height="4" fill="#ddd" />
          <rect x="12" y="3" width="1" height="2" fill="#ddd" />
        </svg>
        <svg width="13" height="12" viewBox="0 0 13 12" fill="none" className="mr-[9px]">
          <path d="M1 4h2l3-3v10L3 8H1z" stroke="#ccc" />
          <path d="M8 4q1.500 2 0 4M10 2.500q3 3.500 0 7" stroke="#888" />
        </svg>
        <svg width="14" height="14" viewBox="0 0 14 14" fill="none" className="mr-[12px]">
          <path d="M1 1h12v9H9l-2 2.500L5 10H1zM3.500 4h7M3.500 6.500h7" stroke="#ddd" />
        </svg>
        <div className="flex flex-col items-center text-[10px] leading-[15px] w-[44px] whitespace-nowrap">
          <span>9:29 AM</span>
          <span>27-Feb-18</span>
        </div>
      </div>
    </div>
  );
}

export default function App() {
  return (
    <div className="w-[1127px] h-[633px] overflow-hidden flex flex-col bg-[#f0f0f0] font-['Lato',sans-serif] blur-[0.4px]">
      <TitleBar />
      <MenuBar />
      <MainToolbar />
      <PropertyBar />
      <div className="flex flex-1 min-h-0">
        <Toolbox />
        <div className="flex-1 flex flex-col min-w-0">
          <div className="h-[17px] bg-[#f0f0f0] flex shrink-0">
            <div className="w-[114px] bg-[#cde4ff] flex items-center pl-[3px] text-[10px] text-[#222] whitespace-nowrap">
              MPV Android Logo De...
            </div>
            <div className="w-[15px] ml-[4px] bg-[#e2e2e2] flex items-center justify-center">
              <svg width="9" height="9" viewBox="0 0 9 9"><path d="M4.500 0v9M0 4.500h9" stroke="#bdbdbd" /></svg>
            </div>
          </div>
          <div className="h-[2px] bg-[#2db4ff] shrink-0" />
          <HRuler />
          <div className="flex flex-1 min-h-0">
            <VRuler />
            <div className="flex-1 flex flex-col min-w-0">
              <div className="flex flex-1 min-h-0">
                <Canvas />
                <VScroll />
              </div>
              <PageNav />
            </div>
          </div>
          <ColorStrip />
        </div>
        <Palette />
      </div>
      <StatusBar />
      <Taskbar />
    </div>
  );
}
